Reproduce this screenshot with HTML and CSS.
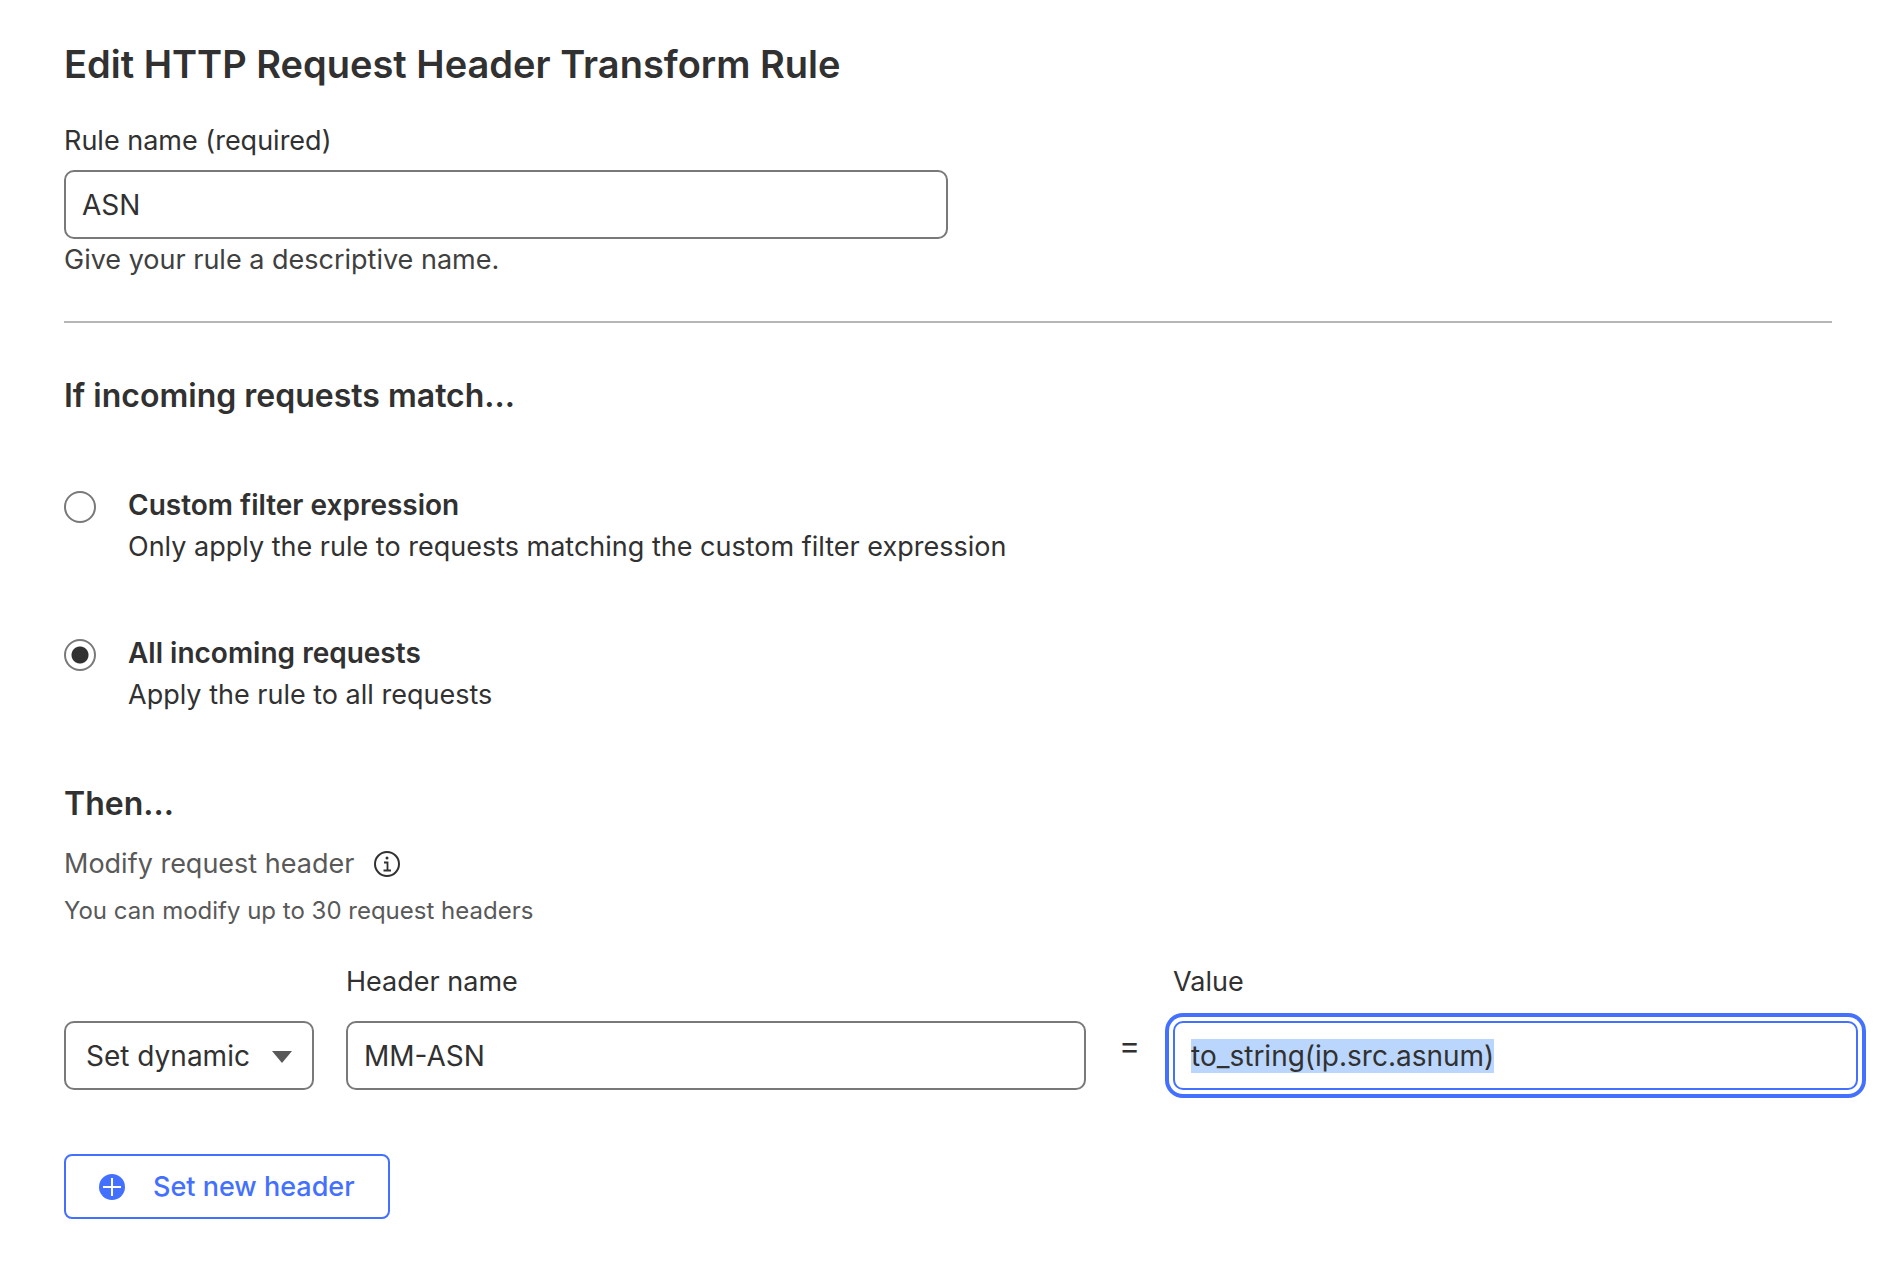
FILE: index.html
```html
<!DOCTYPE html>
<html lang="en">
<head>
<meta charset="utf-8">
<meta name="viewport" content="width=device-width, initial-scale=1">
<title>Edit HTTP Request Header Transform Rule</title>
<link rel="stylesheet" href="styles.css">
</head>
<body>
<main class="page">
  <form class="rule-form">
    <section class="rule-name">
      <h1 class="title">Edit HTTP Request Header Transform Rule</h1>
      <label class="field-label" for="rule-name">Rule name (required)</label>
      <input class="control rule-name-input" id="rule-name" type="text" value="ASN" aria-describedby="rule-help">
      <p class="help" id="rule-help">Give your rule a descriptive name.</p>
    </section>

    <section class="match">
      <h2 class="heading">If incoming requests match...</h2>
      <div class="option">
        <input class="radio" type="radio" name="match" id="match-custom">
        <label class="option-text" for="match-custom">
          <span class="option-title">Custom filter expression</span>
          <span>Only apply the rule to requests matching the custom filter expression</span>
        </label>
      </div>
      <div class="option">
        <input class="radio" type="radio" name="match" id="match-all" checked>
        <label class="option-text" for="match-all">
          <span class="option-title">All incoming requests</span>
          <span>Apply the rule to all requests</span>
        </label>
      </div>
    </section>

    <section class="then">
      <h2 class="heading">Then...</h2>
      <div class="modify">
        <span>Modify request header</span>
        <svg class="info-icon" viewBox="0 0 26 26" fill="none" stroke="currentColor" stroke-width="2" aria-hidden="true">
          <circle cx="13" cy="13" r="12"/>
          <path d="M10 11.5h3.5v8M9.5 19.5h7.500" stroke-width="1.800"/>
          <circle cx="13" cy="7" r="1.500" fill="currentColor" stroke="none"/>
        </svg>
      </div>
      <p class="note">You can modify up to 30 request headers</p>

      <div class="header-row">
        <div class="select-wrap">
          <select class="control select" aria-label="Operation">
            <option>Set dynamic</option>
          </select>
          <svg class="caret" viewBox="0 0 20 12" aria-hidden="true"><path d="M0 0h20L10 12z" fill="currentColor"/></svg>
        </div>
        <div class="field">
          <label for="header-name">Header name</label>
          <input class="control" id="header-name" type="text" value="MM-ASN">
        </div>
        <span class="equals">=</span>
        <div class="field">
          <label for="header-value">Value</label>
          <input class="control" id="header-value" type="text" value="to_string(ip.src.asnum)" spellcheck="false">
        </div>
      </div>

      <button class="add-button" type="button">
        <svg class="plus-icon" viewBox="0 0 26 26" aria-hidden="true">
          <circle cx="13" cy="13" r="13" fill="currentColor"/>
          <path d="M13 4v18M4 13h18" stroke="#fff" stroke-width="2"/>
        </svg>
        Set new header
      </button>
    </section>
  </form>
</main>
<script src="script.js"></script>
</body>
</html>
```
FILE: styles.css
```css
* {
  box-sizing: border-box;
}

body {
  margin: 0;
  background: #fff;
  color: #313131;
  font: 400 27px/42px Inter, "Liberation Sans", sans-serif;
}

h1, h2, p {
  margin: 0;
}

input, select, button {
  font: inherit;
  color: inherit;
}

.page {
  padding: 34px 46px 60px 64px;
}

.rule-name {
  display: flex;
  flex-direction: column;
  align-items: flex-start;
  margin-right: 26px;
  padding-bottom: 40px;
  border-bottom: 2px solid #b6b6b6;
}

.title {
  margin-bottom: 26px;
  font-size: 38px;
  line-height: 60px;
  font-weight: 600;
}

.field-label {
  margin-bottom: 8px;
}

.control {
  width: 100%;
  height: 69px;
  padding: 0 16px;
  border: 2px solid #797979;
  border-radius: 10px;
  background: #fff;
  font-size: 28px;
  outline: none;
}

.rule-name-input {
  width: 50%;
}

.control:focus {
  border-color: #4370ff;
  box-shadow: 0 0 0 4px #fff, 0 0 0 8px #4370ff;
}

.control::selection {
  background: #bbd6fd;
  color: #313131;
}

.help {
  color: #404040;
}

.heading {
  font-size: 32px;
  line-height: 48px;
  font-weight: 600;
}

.match {
  display: flex;
  flex-direction: column;
  gap: 64px;
  padding: 49px 0 64px;
}

.option {
  display: flex;
  gap: 32px;
}

.radio {
  flex: none;
  appearance: none;
  width: 32px;
  height: 32px;
  margin: 7px 0 0;
  border: 2px solid #797979;
  border-radius: 50%;
}

.radio:checked {
  background: radial-gradient(circle, #313131 0 8px, transparent 9px);
}

.option-text {
  display: flex;
  flex-direction: column;
}

.option-title {
  font-size: 28px;
  font-weight: 600;
}

.modify {
  display: flex;
  align-items: center;
  gap: 20px;
  margin: 15px 0 8px;
  color: #595959;
}

.info-icon {
  width: 26px;
  height: 26px;
  color: #313131;
}

.note {
  margin-bottom: 32px;
  color: #595959;
  font-size: 24px;
  line-height: 36px;
}

.header-row {
  display: grid;
  grid-template-columns: 250px 740fr 23px 685fr;
  column-gap: 32px;
  align-items: end;
}

.field {
  display: flex;
  flex-direction: column;
  gap: 18px;
}

.select-wrap {
  position: relative;
  height: 69px;
}

.select {
  appearance: none;
  padding: 0 20px;
}

.caret {
  position: absolute;
  right: 22px;
  top: 30px;
  width: 20px;
  height: 12px;
  color: #595959;
  pointer-events: none;
}

.equals {
  height: 69px;
  font-size: 32px;
  line-height: 50px;
  text-align: center;
}

.add-button {
  display: flex;
  align-items: center;
  gap: 28px;
  height: 65px;
  margin-top: 64px;
  padding: 0 33px;
  border: 2px solid #4370ff;
  border-radius: 8px;
  background: #fff;
  color: #4370ff;
  font-weight: 500;
}

.plus-icon {
  width: 26px;
  height: 26px;
}
```
FILE: script.js
```js
const valueInput = document.getElementById("header-value");
valueInput.focus();
valueInput.select();
```
